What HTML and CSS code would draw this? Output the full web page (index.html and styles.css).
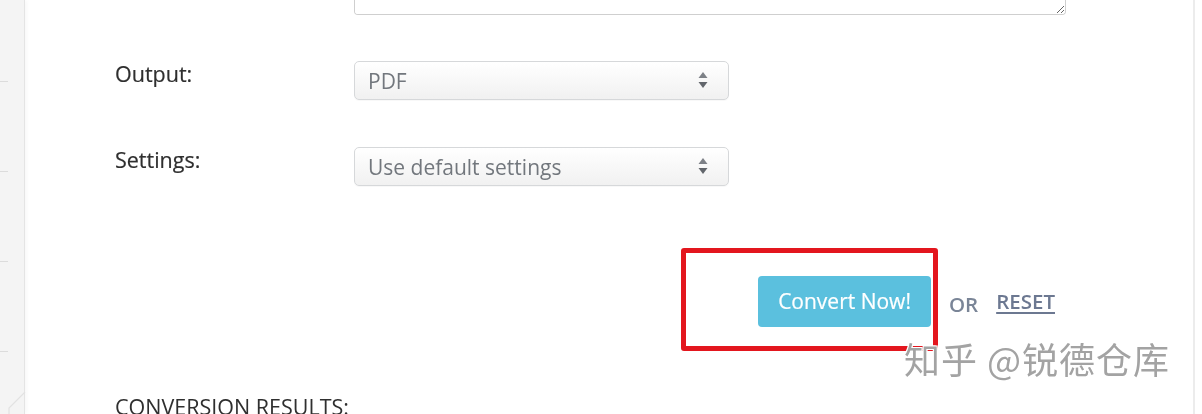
FILE: index.html
```html
<!DOCTYPE html>
<html lang="en">
<head>
<meta charset="utf-8">
<title>Convert</title>
<link rel="stylesheet" href="styles.css">
</head>
<body>
<div class="layout">
  <aside class="sidebar">
    <div class="side-item"></div>
    <div class="side-item"></div>
    <div class="side-item"></div>
    <div class="side-item"></div>
    <div class="side-item side-last"></div>
    <svg class="side-notch" width="30" height="22" viewBox="0 0 30 22">
      <path d="M0 0 H25 L9 16 V22 H0 Z" fill="#f4f4f4"/>
      <path d="M25 0 L9 16 V22" fill="none" stroke="#e2e2e2" stroke-width="1.2"/>
    </svg>
  </aside>
  <main class="content">
    <div class="row row-text">
      <div class="label"></div>
      <textarea class="textarea" aria-label="Input"></textarea>
    </div>
    <div class="row row-output">
      <label class="label">Output:</label>
      <div class="select-wrap">
        <select class="select"><option>PDF</option></select>
        <svg class="arrows" width="10" height="17" viewBox="0 0 10 17">
          <path d="M5 0 L9.5 6 H0.5 Z" fill="#7d8187"/>
          <path d="M0.5 10 H9.5 L5 16 Z" fill="#62666c"/>
        </svg>
      </div>
    </div>
    <div class="row row-settings">
      <label class="label">Settings:</label>
      <div class="select-wrap">
        <select class="select"><option>Use default settings</option></select>
        <svg class="arrows" width="10" height="17" viewBox="0 0 10 17">
          <path d="M5 0 L9.5 6 H0.5 Z" fill="#7d8187"/>
          <path d="M0.5 10 H9.5 L5 16 Z" fill="#62666c"/>
        </svg>
      </div>
    </div>
    <div class="row row-actions">
      <div class="label"></div>
      <div class="actions">
        <button class="btn-convert" type="button">Convert Now!</button>
        <span class="or">OR</span>
        <a class="reset" href="#">RESET</a>
      </div>
    </div>
    <h3 class="results-title">CONVERSION RESULTS:</h3>
  </main>
  <div class="right-rule"></div>
  <div class="highlight"></div>
  <div class="watermark">知乎 @锐德仓库</div>
</div>
</body>
</html>
```
FILE: styles.css
```css
html, body {
  margin: 0;
  padding: 0;
  background: #fff;
}
body {
  width: 1202px;
  height: 414px;
  overflow: hidden;
  font-family: "Open Sans", "Liberation Sans", sans-serif;
}
.layout {
  position: relative;
  display: flex;
  height: 414px;
}
.sidebar {
  width: 24px;
  flex: none;
  display: flex;
  flex-direction: column;
  background: #f4f4f4;
  border-right: 1px solid #e4e4e4;
  box-shadow: 2px 0 4px rgba(0, 0, 0, 0.03);
  position: relative;
}
.side-item {
  height: 82px;
  flex: none;
  border-bottom: 1px solid transparent;
  background-image: linear-gradient(#dcdcdc, #dcdcdc);
  background-size: 8px 1px;
  background-repeat: no-repeat;
  background-position: 0 100%;
}
.side-item + .side-item { height: 89px; }
.side-last {
  height: 36px !important;
  background-image: none;
}
.side-notch {
  position: absolute;
  left: 0;
  top: 392px;
}
.content {
  flex: 1;
  padding-left: 90px;
  color: #333;
}
.right-rule {
  width: 7px;
  flex: none;
  border-left: 2px solid #ececec;
}
.row {
  display: grid;
  grid-template-columns: 239px 712px;
  align-items: start;
}
.label {
  font-size: 21.5px;
  line-height: 28px;
  color: #2f2f2f;
  -webkit-text-stroke: 0.2px #2f2f2f;
}
.row-text { height: 15px; }
.textarea {
  box-sizing: border-box;
  width: 712px;
  height: 15px;
  margin: 0;
  padding: 0;
  border: 1px solid #cfcfcf;
  border-top: none;
  border-radius: 0 0 4px 4px;
  resize: vertical;
  background: #fff;
}
.row-output { margin-top: 45px; }
.row-settings { margin-top: 46px; }
.row-output .select-wrap,
.row-settings .select-wrap { margin-top: 1px; }
.select-wrap {
  position: relative;
  width: 375px;
}
.select {
  appearance: none;
  -webkit-appearance: none;
  box-sizing: border-box;
  width: 375px;
  height: 39px;
  margin: 0;
  padding: 0 40px 0 13px;
  border: 1px solid #d6d8da;
  border-radius: 5px;
  background: linear-gradient(#ffffff, #f1f1f1);
  font-family: "Open Sans", "Liberation Sans", sans-serif;
  font-size: 21px;
  color: #72777d;
  box-shadow: 0 1px 1px rgba(0, 0, 0, 0.03);
}
.arrows {
  position: absolute;
  right: 21px;
  top: 11px;
  pointer-events: none;
}
.row-actions { margin-top: 90px; }
.actions {
  display: flex;
  align-items: center;
  justify-content: flex-end;
  padding-right: 11px;
  gap: 18px;
}
.btn-convert {
  box-sizing: border-box;
  height: 51px;
  padding: 0 20px 2px;
  border: none;
  border-radius: 4px;
  background: #5bc0de;
  color: #fff;
  font-family: "Open Sans", "Liberation Sans", sans-serif;
  font-size: 21px;
  -webkit-text-stroke: 0.2px #fff;
}
.or {
  font-size: 20.5px;
  font-weight: 600;
  color: #7a8597;
  margin-top: 4px;
}
.reset {
  font-size: 20.5px;
  font-weight: 600;
  color: #6c7891;
  text-decoration: underline;
  text-underline-offset: 3px;
  margin-top: -2px;
}
.results-title {
  margin: 66px 0 0;
  font-size: 21.5px;
  line-height: 28px;
  font-weight: 400;
  color: #2f2f2f;
}
.highlight {
  position: absolute;
  left: 681px;
  top: 248px;
  width: 257px;
  height: 103px;
  box-sizing: border-box;
  border: 5px solid #e3161e;
  border-radius: 3px;
}
.watermark {
  position: absolute;
  left: 904px;
  top: 334px;
  font-family: "Noto Sans CJK SC", sans-serif;
  font-size: 36px;
  line-height: 48px;
  color: #a3a3a3;
  letter-spacing: 1px;
  text-shadow: 1px 1px 0 #fff, -1px -1px 0 #fff, 1px -1px 0 #fff, -1px 1px 0 #fff;
}
```
